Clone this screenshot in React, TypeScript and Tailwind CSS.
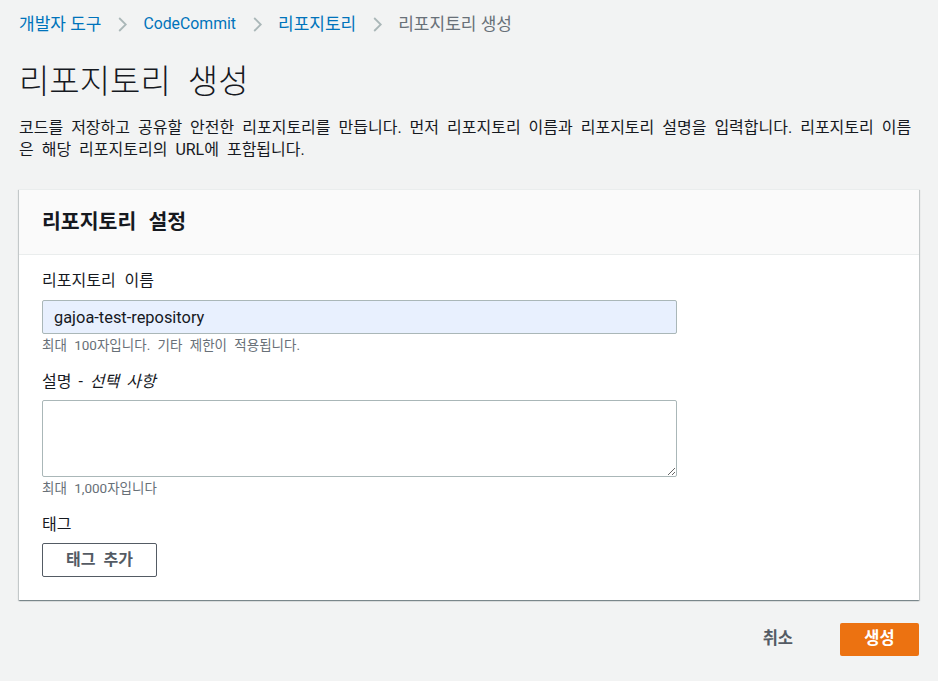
import React from 'react';

const ko = 'font-[Roboto,"Noto_Sans_CJK_KR",sans-serif]';

const Chevron = () => (
  <svg width="9" height="15" viewBox="0 0 9 15" fill="none" className="shrink-0">
    <polyline points="1.2,1 7.8,7.5 1.2,14" stroke="#aab7b8" strokeWidth="1.8" />
  </svg>
);

export default function App() {
  return (
    <div className={`${ko} min-h-screen bg-[#f2f3f3] px-[19px] text-[#16191f]`}>
      {/* breadcrumbs */}
      <nav className="flex items-center gap-[16.5px] pt-[13px] text-[17px] leading-[22px]">
        <a className="text-[#0073bb]">개발자 도구</a>
        <Chevron />
        <a className="text-[15.8px] text-[#0073bb]">CodeCommit</a>
        <Chevron />
        <a className="text-[#0073bb]">리포지토리</a>
        <Chevron />
        <span className="text-[#687078]">리포지토리 생성</span>
      </nav>

      <h1 className="mt-[27px] text-[33px] leading-[40px] font-light [word-spacing:9px]">
        리포지토리 생성
      </h1>
      <p className="mt-[15px] text-[16px] leading-[22px] [word-spacing:4px]">
        코드를 저장하고 공유할 안전한 리포지토리를 만듭니다. 먼저 리포지토리 이름과 리포지토리 설명을 입력합니다. 리포지토리 이름
        <br />
        은 해당 리포지토리의 URL에 포함됩니다.
      </p>

      {/* settings card */}
      <section className="mt-[28px] border-t border-[#eaeded] bg-white shadow-[0_1px_1px_0_rgba(0,28,36,0.3),1px_1px_1px_0_rgba(0,28,36,0.15),-1px_1px_1px_0_rgba(0,28,36,0.15)]">
        <div className="flex h-[65px] items-center border-b border-[#eaeded] bg-[#fafafa] px-[23px]">
          <h2 className="text-[20.5px] font-bold [word-spacing:7px]">리포지토리 설정</h2>
        </div>
        <div className="flex flex-col px-[23px] pt-[15px] pb-[23px]">
          <label className="text-[16px] leading-[22px] [word-spacing:5px]">리포지토리 이름</label>
          <input
            defaultValue="gajoa-test-repository"
            className="mt-[8px] h-[34px] w-[635px] rounded-[2px] border border-[#aab7b8] bg-[#e8f0fe] px-[11px] text-[16.4px] text-[#16191f] outline-none"
          />
          <p className="mt-[3px] text-[13.5px] leading-[17px] text-[#687078] [word-spacing:4px]">
            최대 100자입니다. 기타 제한이 적용됩니다.
          </p>

          <label className="mt-[17px] text-[16px] leading-[22px] [word-spacing:3px]">
            설명 - <i>선택 사항</i>
          </label>
          <textarea className="mt-[7px] h-[77px] w-[635px] rounded-[2px] border border-[#aab7b8] bg-white outline-none" />
          <p className="mt-[3px] text-[13.5px] leading-[17px] text-[#687078] [word-spacing:4px]">
            최대 1,000자입니다
          </p>

          <label className="mt-[17px] text-[16px] leading-[22px]">태그</label>
          <div className="mt-[7px]">
            <button className="h-[34px] w-[115px] rounded-[2px] border border-[#545b64] bg-white text-[16px] font-bold text-[#545b64] [word-spacing:4px]">
              태그 추가
            </button>
          </div>
        </div>
      </section>

      {/* actions */}
      <div className="mt-[23px] flex items-center justify-end gap-[27px]">
        <button className="h-[33px] px-[20px] text-[16.5px] font-bold text-[#545b64]">취소</button>
        <button className="h-[33px] w-[79px] rounded-[2px] bg-[#ec7211] text-[16.5px] font-bold text-white">
          생성
        </button>
      </div>
    </div>
  );
}
